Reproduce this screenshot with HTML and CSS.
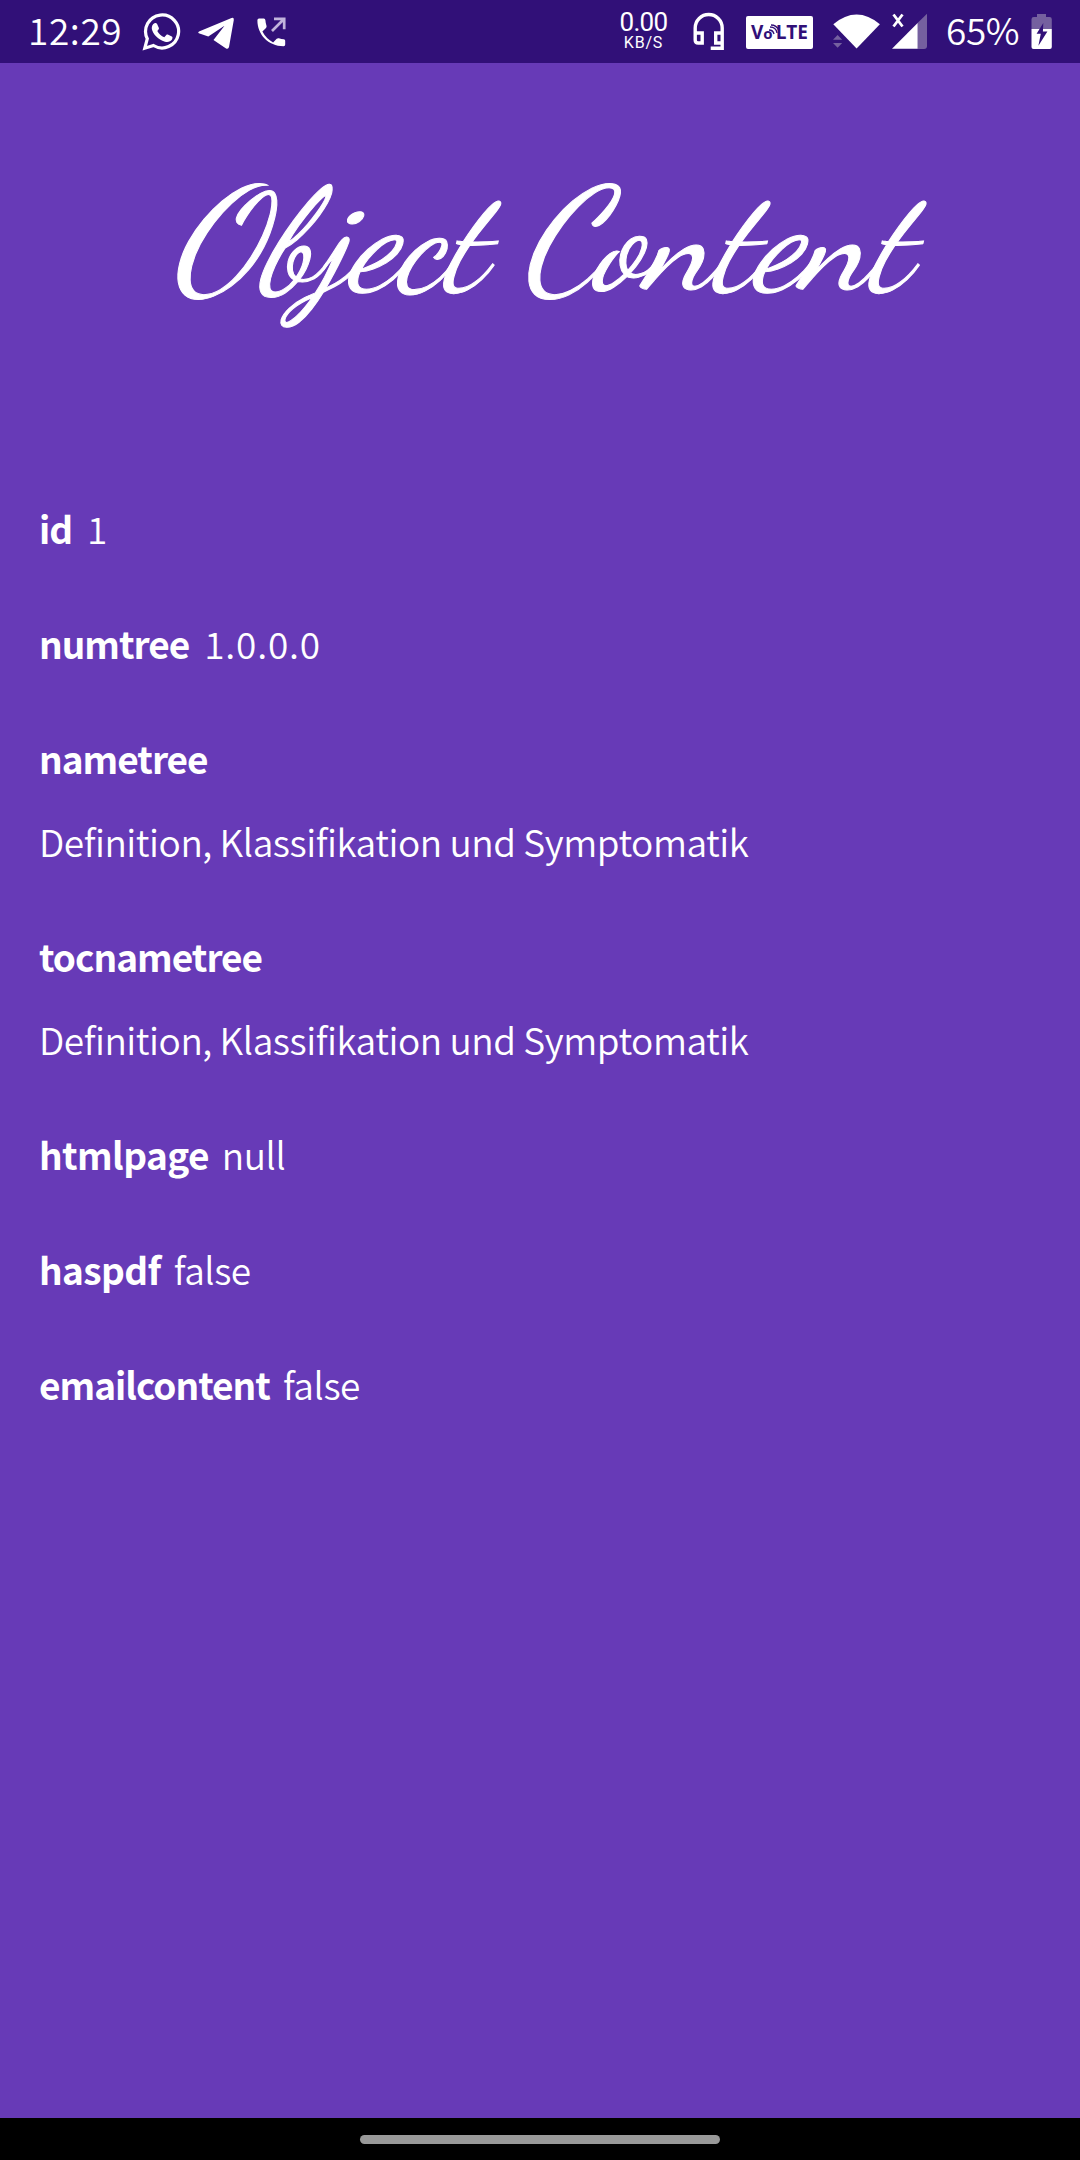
FILE: index.html
```html
<!DOCTYPE html>
<html lang="en">
<head>
<meta charset="utf-8">
<title>Object Content</title>
<link rel="stylesheet" href="styles.css">
</head>
<body>
<header class="status">
  <div class="group">
    <span class="time">12:29</span>
    <svg class="whatsapp" width="40" height="63" viewBox="141 0 40 63"><path d="M144.800 48.200l2.500-9.500a16.500 16.500 0 1 1 6.200 6.800z" fill="none" stroke="#fff" stroke-width="3.200"/><path d="M154.500 23.200c1-.4 2-.3 2.600.7l1.800 4.100c.3.700-.3 1.700-1.600 3 1.500 3 4 5.100 7 6.300l2-2.300c.6-.7 1.200-.6 2-.2l3.500 1.800c1 .5.800 1.800.2 2.900-1.300 2.200-4.300 3-7 2.200-7-2-12.500-8.300-13.200-13-.3-2.500 1-4.700 2.700-5.500z" fill="#fff"/></svg>
    <svg class="telegram" width="40" height="63" viewBox="196 0 40 63"><path d="M199 31.600L231.500 18q2.600-.8 2.300 2l-4.800 27q-.7 2.800-3.300 1.300L213.500 40l11-14.200-16.200 10.600-9.500-3.100q-1.400-.8.200-1.700z" fill="#fff"/></svg>
    <svg width="32" height="63" viewBox="256 0 32 63"><path d="M259 18.500h4.800q1.500 0 1.600 1.700.2 3 1.100 5.600.4 1.300-.5 2.200l-3.600 3.600q3.700 7.200 10.700 10.800l3.600-3.600q1-.9 2.200-.5 2.600.9 4.900 1 1.400.1 1.400 1.500V44.500q0 1.700-1.600 1.700C268 46 257.400 34.500 257.400 20.200q0-1.700 1.600-1.700z" fill="#fff"/><path d="M272 31l12-12M274 18.800h10.200v10.500" fill="none" stroke="#c1b4dc" stroke-width="2.700"/></svg>
  </div>
  <div class="group">
    <div class="speed"><span class="rate">0.00</span><span class="unit">KB/S</span></div>
    <svg class="headset" width="34" height="63" viewBox="692 0 34 63"><path d="M695.200 33v-5a13.500 13.500 0 0 1 27 0v20.200h-11.500M695.200 33h7v10h-4q-3 0-3-3zM722.200 33h-6.500v10h6.500" fill="none" stroke="#fff" stroke-width="3.400"/></svg>
    <div class="volte"><span>V</span><span class="small-o">o</span><span class="lte">LTE</span><svg class="waves" width="10" height="12" viewBox="0 0 10 12"><path d="M0 6q4 0 5 4M1 3q6 0 7 6M2 1q6 0 8 6" fill="none" stroke="#311078" stroke-width="1.300"/></svg></div>
    <svg class="wifi" width="49" height="63" viewBox="832 0 49 63"><path d="M833.300 24.300q23.300-19.400 46.600 0L856.600 48.500z" fill="#fff"/><path d="M833 39.800l4.600-4.700 4.600 4.700zM833 43l4.600 4.700 4.600-4.700z" fill="#75609f"/></svg>
    <svg class="signal" width="37" height="63" viewBox="891 0 37 63"><path d="M917.500 23l9.500-9.300V46q0 3-3 3h-6.500z" fill="#75609f"/><path d="M892 48.700L917.600 23v25.700z" fill="#fff"/><path d="M893.500 14.500l9 12M902.500 14.500l-9 12" stroke="#fff" stroke-width="2.800"/></svg>
    <span class="percent">65%</span>
    <svg class="battery" width="21" height="63" viewBox="1031.500 0 21 63"><path d="M1037.500 14h9v3h3.500q2.300 0 2.300 2.300V29h-20.300v-9.700q0-2.300 2.300-2.300h3.200z" fill="#75609f"/><path d="M1032 29h20.300v18q0 2-2 2h-16.300q-2 0-2-2z" fill="#fff"/><path d="M1043.800 23l-6.700 10.800h4.200l-2.400 12 9-14.300h-4.500z" fill="#311078"/></svg>
  </div>
</header>
<main>
  <h1>Object Content</h1>
  <dl>
    <div class="field"><dt>id</dt><dd class="num">1</dd></div>
    <div class="field"><dt>numtree</dt><dd class="num">1.0.0.0</dd></div>
    <div class="field stacked"><dt>nametree</dt><dd>Definition, Klassifikation und Symptomatik</dd></div>
    <div class="field stacked"><dt>tocnametree</dt><dd>Definition, Klassifikation und Symptomatik</dd></div>
    <div class="field loose"><dt>htmlpage</dt><dd>null</dd></div>
    <div class="field loose"><dt>haspdf</dt><dd>false</dd></div>
    <div class="field"><dt>emailcontent</dt><dd>false</dd></div>
  </dl>
</main>
<footer><div class="pill"></div></footer>
</body>
</html>
```
FILE: styles.css
```css
* { box-sizing: border-box; }
body {
  margin: 0;
  width: 1080px;
  height: 2160px;
  display: flex;
  flex-direction: column;
  background: #673ab7;
  color: #fff;
  font-family: "Noto Sans CJK SC", "Noto Sans", sans-serif;
}
svg { display: block; flex: none; }
.status {
  height: 63px;
  flex: none;
  display: flex;
  justify-content: space-between;
  padding: 0 28px 0 28px;
  background: #311078;
}
.group { display: flex; }
.time, .percent { font-size: 37px; line-height: 58px; font-weight: 350; white-space: nowrap; }
.time { width: 113px; letter-spacing: .6px; }
.telegram { margin: 0 20px 0 15px; }
.speed {
  width: 47px;
  margin-right: 25px;
  padding-top: 10px;
  display: flex;
  flex-direction: column;
  align-items: center;
  font-family: Roboto, sans-serif;
}
.rate { font-size: 26px; line-height: 24px; letter-spacing: -.7px; }
.unit { font-size: 16px; line-height: 14px; margin-top: 2px; letter-spacing: .8px; }
.volte {
  position: relative;
  width: 67px;
  height: 33px;
  margin: 16px 19px 0 20px;
  border-radius: 2px;
  background: #fff;
  color: #311078;
  display: flex;
  align-items: center;
  justify-content: center;
  font: 700 19px/33px "Open Sans", sans-serif;
}
.small-o { font-size: 15px; padding-top: 2px; }
.lte { padding-left: 3px; }
.waves { position: absolute; left: 23px; top: 8px; }
.signal { margin: 0 18px 0 10px; }
.percent { width: 77px; letter-spacing: -.4px; }
.battery { margin-left: 8px; }
main { flex: 1; }
h1 {
  height: 308px;
  margin: 0;
  padding-top: 98px;
  text-align: center;
  font: italic 400 144px/160px "Dancing Script", cursive;
  -webkit-text-stroke: 1px #fff;
}
dl { margin: 130px 0 0 39px; }
.field { display: flex; gap: 13px; margin-bottom: 60px; font-size: 37px; line-height: 55px; }
.stacked { flex-direction: column; gap: 28px; }
dt { font-weight: 700; letter-spacing: -1px; }
.loose dt { letter-spacing: -.6px; }
dd { margin: 0; font-weight: 350; letter-spacing: -.46px; }
.num { padding-left: 2px; letter-spacing: .8px; }
footer { height: 42px; background: #000; padding-top: 17px; }
.pill { width: 360px; height: 9px; margin: 0 auto; border-radius: 5px; background: #999; }
```
